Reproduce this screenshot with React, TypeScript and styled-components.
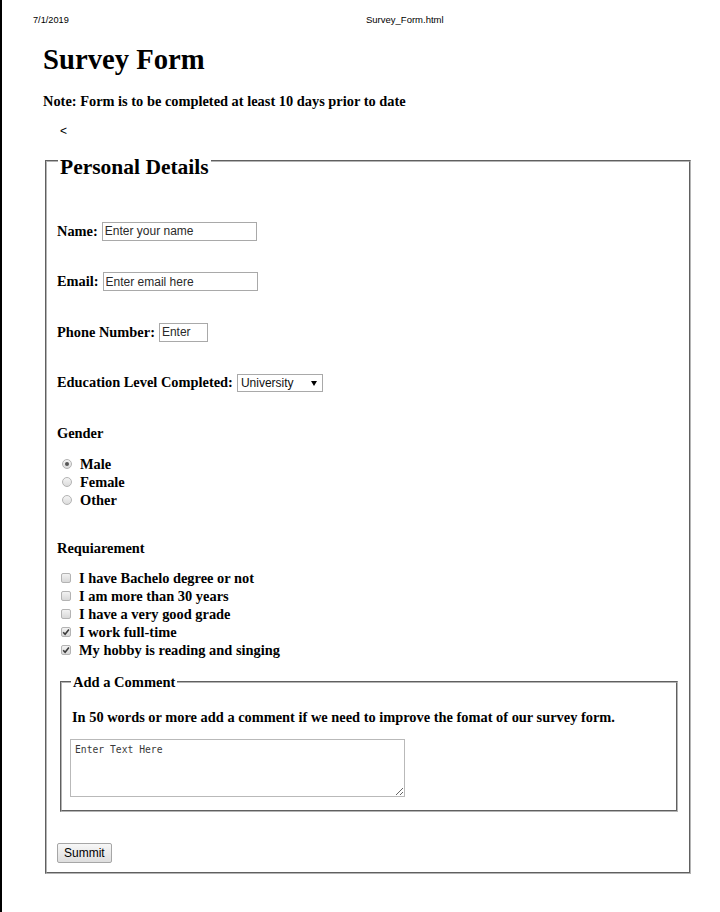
import React from 'react';
import styled, {createGlobalStyle} from "styled-components";

const GlobalStyle = createGlobalStyle`
  html, body {
    margin: 0;
    padding: 0;
    background: #fff;
  }
  body {
    min-height: 100vh;
    box-shadow: inset 2px 0 0 #000;
    font-family: "Liberation Serif", "Times New Roman", serif;
    color: #000;
  }
`

const genders = ['Male', 'Female', 'Other'];

const requirements = [
    {text: 'I have Bachelo degree or not', checked: false},
    {text: 'I am more than 30 years', checked: false},
    {text: 'I have a very good grade', checked: false},
    {text: 'I work full-time', checked: true},
    {text: 'My hobby is reading and singing', checked: true},
];

const Radio = ({checked}: {checked?: boolean}) => (
    <StyledRadio>{checked && <StyledRadioDot/>}</StyledRadio>
);

const Checkbox = ({checked}: {checked?: boolean}) => (
    <StyledCheckbox>
        {checked && (
            <svg width="8" height="8" viewBox="0 0 8 8">
                <path d="M1.2 4.2 L3.1 6.2 L6.9 1.4" fill="none" stroke="#3a3a3a" strokeWidth="1.6"/>
            </svg>
        )}
    </StyledCheckbox>
);

export default function App() {
    return (
        <>
            <GlobalStyle/>
            <StyledPrintHeader>
                <span>7/1/2019</span>
                <span>Survey_Form.html</span>
            </StyledPrintHeader>

            <StyledTitle>Survey Form</StyledTitle>
            <StyledNote>Note: Form is to be completed at least 10 days prior to date</StyledNote>
            <StyledStray>&lt;</StyledStray>

            <StyledFieldset>
                <StyledLegend>Personal Details</StyledLegend>

                <StyledFields>
                    <StyledRow>
                        <StyledLabel>Name:</StyledLabel>
                        <StyledInput width={155} placeholder="Enter your name"/>
                    </StyledRow>
                    <StyledRow>
                        <StyledLabel>Email:</StyledLabel>
                        <StyledInput width={155} placeholder="Enter email here"/>
                    </StyledRow>
                    <StyledRow>
                        <StyledLabel>Phone Number:</StyledLabel>
                        <StyledInput width={49} placeholder="Enter"/>
                    </StyledRow>
                    <StyledRow>
                        <StyledLabel>Education Level Completed:</StyledLabel>
                        <StyledSelectBox>
                            <StyledSelect defaultValue="university">
                                <option value="university">University</option>
                                <option value="college">College</option>
                                <option value="high">High School</option>
                            </StyledSelect>
                            <StyledArrow width="6" height="5" viewBox="0 0 6 5">
                                <path d="M0 0 H6 L3 5 Z" fill="#000"/>
                            </StyledArrow>
                        </StyledSelectBox>
                    </StyledRow>
                    <StyledRow>
                        <StyledLabel>Gender</StyledLabel>
                    </StyledRow>
                </StyledFields>

                <StyledOptions top={12}>
                    {genders.map((g, i) => (
                        <StyledOption key={g}>
                            <Radio checked={i === 0}/>
                            {g}
                        </StyledOption>
                    ))}
                </StyledOptions>

                <StyledHeadingRow>
                    <StyledLabel>Requiarement</StyledLabel>
                </StyledHeadingRow>

                <StyledOptions top={11}>
                    {requirements.map(r => (
                        <StyledOption key={r.text}>
                            <Checkbox checked={r.checked}/>
                            {r.text}
                        </StyledOption>
                    ))}
                </StyledOptions>

                <StyledInnerFieldset>
                    <StyledInnerLegend>Add a Comment</StyledInnerLegend>
                    <StyledComment>In 50 words or more add a comment if we need to improve the fomat of our survey form.</StyledComment>
                    <StyledTextarea placeholder="Enter Text Here"/>
                </StyledInnerFieldset>

                <StyledButton type="button">Summit</StyledButton>
            </StyledFieldset>
        </>
    );
}

const StyledPrintHeader = styled.div`
  display: grid;
  grid-template-columns: 333px auto;
  padding: 15px 0 0 33px;
  height: 10px;
  font-family: "Liberation Sans", Arial, sans-serif;
  font-size: 9.2px;
  line-height: 10px;

  span + span {
    font-size: 9.5px;
  }
`

const StyledTitle = styled.h1`
  margin: 17px 0 0 43px;
  font-size: 28.7px;
  line-height: 34px;
  font-weight: bold;
`

const StyledNote = styled.p`
  margin: 16px 0 0 43px;
  font-size: 14.4px;
  line-height: 18px;
  font-weight: bold;
`

const StyledStray = styled.p`
  margin: 14px 0 0 60px;
  font-family: "Liberation Sans", Arial, sans-serif;
  font-size: 12px;
  line-height: 14px;
`

const StyledFieldset = styled.fieldset`
  box-sizing: border-box;
  width: 646px;
  margin: 4.5px 0 0 45px;
  padding: 0 10px 9px 10px;
  border: 2px groove #b4b4b4;
  min-width: 0;
`

const StyledLegend = styled.legend`
  margin-left: 1px;
  padding: 12px 2px 0 2px;
  font-size: 21.5px;
  line-height: 25px;
  font-weight: bold;
`

const StyledFields = styled.div`
  display: flex;
  flex-direction: column;
  gap: 30.5px;
  padding-top: 41.5px;
`

const StyledRow = styled.div`
  display: flex;
  align-items: center;
  height: 20px;
`

const StyledHeadingRow = styled(StyledRow)`
  margin-top: 29px;
`

const StyledLabel = styled.span`
  font-size: 14.4px;
  font-weight: bold;
  margin-right: 4px;
`

const StyledInput = styled.input<{width: number}>`
  box-sizing: border-box;
  width: ${({width}) => width}px;
  height: 19px;
  padding: 0 2px;
  border: 1px solid #a9a9a9;
  border-radius: 0;
  font-family: "Liberation Sans", Arial, sans-serif;
  font-size: 12px;
  color: #222;
  outline: none;

  &::placeholder {
    color: #2a2a2a;
    opacity: 1;
  }
`

const StyledSelectBox = styled.div`
  position: relative;
  display: inline-flex;
`

const StyledSelect = styled.select`
  box-sizing: border-box;
  appearance: none;
  width: 86px;
  height: 18px;
  padding: 0 0 0 3px;
  border: 1px solid #a9a9a9;
  border-radius: 0;
  background: #fff;
  font-family: "Liberation Sans", Arial, sans-serif;
  font-size: 12px;
  color: #111;
`

const StyledArrow = styled.svg`
  position: absolute;
  right: 6px;
  top: 7px;
  pointer-events: none;
`

const StyledOptions = styled.div<{top: number}>`
  display: flex;
  flex-direction: column;
  margin-top: ${({top}) => top}px;
`

const StyledOption = styled.label`
  display: flex;
  align-items: center;
  height: 18px;
  padding-left: 4px;
  font-size: 14.4px;
  font-weight: bold;
`

const StyledRadio = styled.span`
  box-sizing: border-box;
  display: inline-flex;
  align-items: center;
  justify-content: center;
  width: 10px;
  height: 10px;
  margin: 0 8px 0 1px;
  border: 1px solid #b3b3b3;
  border-radius: 50%;
  background: linear-gradient(#f4f4f4, #dcdcdc);
`

const StyledRadioDot = styled.span`
  width: 4px;
  height: 4px;
  border-radius: 50%;
  background: #555;
`

const StyledCheckbox = styled.span`
  box-sizing: border-box;
  display: inline-flex;
  align-items: center;
  justify-content: center;
  width: 10px;
  height: 10px;
  margin-right: 8px;
  border: 1px solid #b3b3b3;
  border-radius: 2px;
  background: linear-gradient(#f2f2f2, #d8d8d8);
`

const StyledInnerFieldset = styled.fieldset`
  box-sizing: border-box;
  width: 618px;
  margin: 14px 0 0 3px;
  padding: 0 8px 13px 8px;
  border: 2px groove #b4b4b4;
  min-width: 0;
`

const StyledInnerLegend = styled.legend`
  margin-left: 1px;
  padding: 0 2px;
  font-size: 14.5px;
  line-height: 18px;
  font-weight: bold;
`

const StyledComment = styled.p`
  margin: 17px 0 0 2px;
  font-size: 14.4px;
  line-height: 18px;
  font-weight: bold;
`

const StyledTextarea = styled.textarea`
  display: block;
  box-sizing: border-box;
  width: 335px;
  height: 58px;
  margin-top: 13px;
  padding: 4px 4px 2px 4px;
  border: 1px solid #b9b9b9;
  font-family: "DejaVu Sans Mono", "Liberation Mono", monospace;
  font-size: 9.7px;
  color: #333;

  &::placeholder {
    color: #3a3a3a;
    opacity: 1;
  }
`

const StyledButton = styled.button`
  box-sizing: border-box;
  display: block;
  height: 20px;
  margin-top: 31px;
  padding: 0 6px;
  border: 1px solid #a6a6a6;
  border-radius: 2px;
  background: linear-gradient(#f7f7f7, #dedede);
  font-family: "Liberation Sans", Arial, sans-serif;
  font-size: 12px;
  color: #000;
`
